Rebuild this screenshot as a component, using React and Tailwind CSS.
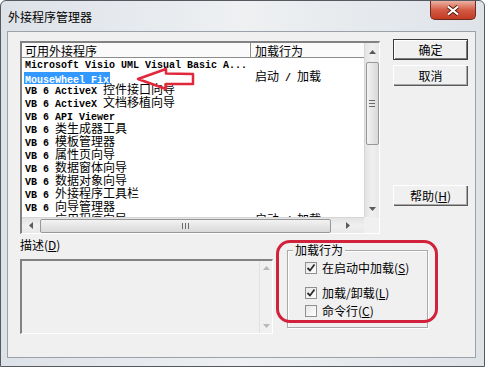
import React from "react";

const rows = [
  ["Microsoft Visio UML Visual Basic A...", ""],
  ["MouseWheel Fix", "启动 / 加载"],
  ["VB 6 ActiveX 控件接口向导", ""],
  ["VB 6 ActiveX 文档移植向导", ""],
  ["VB 6 API Viewer", ""],
  ["VB 6 类生成器工具", ""],
  ["VB 6 模板管理器", ""],
  ["VB 6 属性页向导", ""],
  ["VB 6 数据窗体向导", ""],
  ["VB 6 数据对象向导", ""],
  ["VB 6 外接程序工具栏", ""],
  ["VB 6 向导管理器", ""],
  ["VB 6 应用程序向导", "启动 / 加载"],
];

function Mixed({ text }) {
  const parts = text.match(/[\u4e00-\u9fff]+|[^\u4e00-\u9fff]+/g) || [];
  return parts.map((p, i) =>
    /[\u4e00-\u9fff]/.test(p) ? (
      <span key={i} className="font-['Noto_Sans_CJK_SC',sans-serif] text-[12px] leading-[12px]">
        {p}
      </span>
    ) : (
      <span
        key={i}
        className="font-['Liberation_Mono',monospace] text-[10px] leading-[12px] font-bold whitespace-pre"
      >
        {p}
      </span>
    )
  );
}

function Arrow({ dir, dim }) {
  const pts = {
    up: "0,4 3.5,0 7,4",
    down: "0,0 3.5,4 7,0",
    left: "4,0 0,3.5 4,7",
    right: "0,0 4,3.5 0,7",
  }[dir];
  const vertical = dir === "up" || dir === "down";
  return (
    <svg width={vertical ? 7 : 4} height={vertical ? 4 : 7}>
      <polygon points={pts} fill={dim ? "#b8b8b8" : "#5a5a5a"} />
    </svg>
  );
}

function Check({ on }) {
  return (
    <div className="w-[12px] h-[12px] border border-[#8f8f8f] bg-gradient-to-br from-[#e6e6e6] to-white flex items-center justify-center">
      {on && (
        <svg width="10" height="10">
          <path d="M1.5 5 L4 7.5 L8.5 1.5" stroke="#2b2b2b" strokeWidth="1.8" fill="none" />
        </svg>
      )}
    </div>
  );
}

function Btn({ children, main, className }) {
  return (
    <div
      className={
        "w-[75px] h-[21px] flex items-center justify-center text-[12px] leading-none bg-[#f0f0f0] " +
        (main
          ? "border border-[#3c3c3c] shadow-[inset_1px_1px_0_#ffffff,inset_-1px_-1px_0_#7a7a7a] "
          : "shadow-[inset_1px_1px_0_#ffffff,inset_-1px_-1px_0_#5a5a5a,inset_-2px_-2px_0_#a8a8a8] ") +
        (className || "")
      }
    >
      {children}
    </div>
  );
}

export default function App() {
  return (
    <div className="relative w-[485px] h-[367px] overflow-hidden rounded-t-[6px] border border-[#565a60] bg-gradient-to-r from-[#dde2e8] via-[#eef0f2] to-[#dfe3e8] font-['Noto_Sans_CJK_SC','Liberation_Sans',sans-serif] text-[#000]">
      {/* title bar */}
      <div className="h-[30px] flex items-center pl-[7px] pt-[1px] text-[12px] leading-none">
        外接程序管理器
      </div>
      <div className="absolute right-[8px] top-0 w-[46px] h-[19px] rounded-b-[5px] border border-t-0 border-[#6a2b20] bg-gradient-to-b from-[#eab1a3] via-[#d35a43] to-[#c33a22] flex items-center justify-center">
        <svg width="14" height="11">
          <path d="M2 1.5 L12 9.5 M12 1.5 L2 9.5" stroke="#5a1d12" strokeWidth="4" />
          <path d="M2 1.5 L12 9.5 M12 1.5 L2 9.5" stroke="#ffffff" strokeWidth="2.2" />
        </svg>
      </div>

      {/* client */}
      <div className="ml-[6px] w-[469px] h-[327px] border border-[#9aa1a9] bg-[#f0f0f0] pl-[12px] pt-[7px] text-[12px]">
        <div className="flex items-start">
          {/* list view */}
          <div className="mt-[2px] w-[360px] h-[193px] border-t-2 border-l-2 border-r border-b border-t-[#828282] border-l-[#828282] border-r-white border-b-white bg-white flex flex-col">
            <div className="flex h-[174px]">
              <div className="w-[342px] h-[174px] overflow-hidden">
                <div className="flex h-[15px] items-center bg-[#fafafa] border-b border-[#8c8c8c] text-[12px] leading-[13px]">
                  <div className="w-[229px] h-full flex items-center pl-[3px] border-r border-[#8c8c8c] shadow-[inset_-1px_0_0_#fff]">
                    可用外接程序
                  </div>
                  <div className="pl-[4px]">加载行为</div>
                </div>
                {rows.map(([a, b], i) => (
                  <div key={i} className="flex h-[13px] items-center leading-[12px]">
                    <div className="w-[230px] pl-[2px] overflow-hidden whitespace-nowrap">
                      <span
                        className={
                          i === 1
                            ? "bg-[#3399ff] text-white px-[1px] inline-block h-[12px] leading-[12px]"
                            : "px-[1px]"
                        }
                      >
                        <Mixed text={a} />
                      </span>
                    </div>
                    <div className="pl-[3px] whitespace-nowrap">
                      <Mixed text={b} />
                    </div>
                  </div>
                ))}
              </div>
              {/* vertical scrollbar */}
              <div className="w-[15px] h-[174px] bg-gradient-to-r from-[#e3e3e3] via-[#f0f0f0] to-[#e8e8e8] border-l border-[#d6d6d6] flex flex-col items-center">
                <div className="h-[17px] flex items-center justify-center">
                  <Arrow dir="up" />
                </div>
                <div className="mt-[2px] w-[13px] h-[83px] rounded-[2px] border border-[#979797] bg-gradient-to-r from-[#f3f3f3] to-[#d9d9d9] flex flex-col items-center justify-center gap-[2px]">
                  <div className="w-[6px] h-px bg-[#6a6a6a]" />
                  <div className="w-[6px] h-px bg-[#6a6a6a]" />
                  <div className="w-[6px] h-px bg-[#6a6a6a]" />
                </div>
                <div className="flex-1" />
                <div className="h-[17px] flex items-center justify-center">
                  <Arrow dir="down" />
                </div>
              </div>
            </div>
            {/* horizontal scrollbar */}
            <div className="flex h-[16px]">
              <div className="w-[342px] h-[16px] bg-gradient-to-b from-[#e3e3e3] via-[#f0f0f0] to-[#e8e8e8] border-t border-[#d6d6d6] flex items-center">
                <div className="w-[17px] flex items-center justify-center">
                  <Arrow dir="left" />
                </div>
                <div className="ml-[1px] w-[291px] h-[14px] rounded-[2px] border border-[#979797] bg-gradient-to-b from-[#f3f3f3] to-[#d9d9d9] flex items-center justify-center gap-[2px]">
                  <div className="w-px h-[6px] bg-[#6a6a6a]" />
                  <div className="w-px h-[6px] bg-[#6a6a6a]" />
                  <div className="w-px h-[6px] bg-[#6a6a6a]" />
                </div>
                <div className="flex-1 flex items-center justify-center">
                  <Arrow dir="right" />
                </div>
              </div>
              <div className="w-[15px] h-[16px] bg-[#f0f0f0]" />
            </div>
          </div>

          {/* buttons */}
          <div className="ml-[13px] flex flex-col">
            <Btn main>确定</Btn>
            <Btn className="mt-[5px]">取消</Btn>
            <Btn className="mt-[99px]">
              帮助(<span className="underline">H</span>)
            </Btn>
          </div>
        </div>

        <div className="flex items-start">
          <div className="w-[253px] flex flex-col">
            <div className="mt-[5px] h-[12px] leading-[12px] text-[12px]">
              描述(<span className="underline">D</span>)
            </div>
            <div className="mt-[8px] h-[75px] border-t-2 border-l-2 border-r border-b border-t-[#828282] border-l-[#828282] border-r-white border-b-white bg-[#f0f0f0] flex justify-end">
              <div className="w-[13px] h-full border-l border-[#e2e2e2] flex flex-col items-center justify-between py-[5px]">
                <Arrow dir="up" dim />
                <Arrow dir="down" dim />
              </div>
            </div>
          </div>

          {/* group box */}
          <div className="relative ml-[14px] mt-[16px] w-[141px] h-[78px] border border-[#a9a9a9] shadow-[1px_1px_0_#ffffff,inset_1px_1px_0_#ffffff] pl-[17px] pt-[10px]">
            <div className="absolute left-[5px] top-[-8px] px-[2px] bg-[#f0f0f0] text-[12px] leading-[14px]">
              加载行为
            </div>
            <div className="flex items-center h-[14px] gap-[5px] leading-none">
              <Check on />
              <span>
                在启动中加载(<span className="underline">S</span>)
              </span>
            </div>
            <div className="mt-[11px] flex items-center h-[14px] gap-[5px] leading-none">
              <Check on />
              <span>
                加载/卸载(<span className="underline">L</span>)
              </span>
            </div>
            <div className="mt-[4px] flex items-center h-[14px] gap-[5px] leading-none">
              <Check />
              <span>
                命令行(<span className="underline">C</span>)
              </span>
            </div>
          </div>
        </div>
      </div>

      {/* red annotations */}
      <div className="absolute left-[275px] top-[239px] w-[162px] h-[83px] rounded-[14px] border-[3px] border-[#d2213a]" />
      <svg className="absolute left-[135px] top-[66px]" width="62" height="26">
        <path
          d="M2 12 L30 2 L30 6.5 L57 7 L57 17 L30 17 L30 22 Z"
          fill="none"
          stroke="#e0283a"
          strokeWidth="2.5"
          strokeLinejoin="round"
        />
      </svg>
    </div>
  );
}
